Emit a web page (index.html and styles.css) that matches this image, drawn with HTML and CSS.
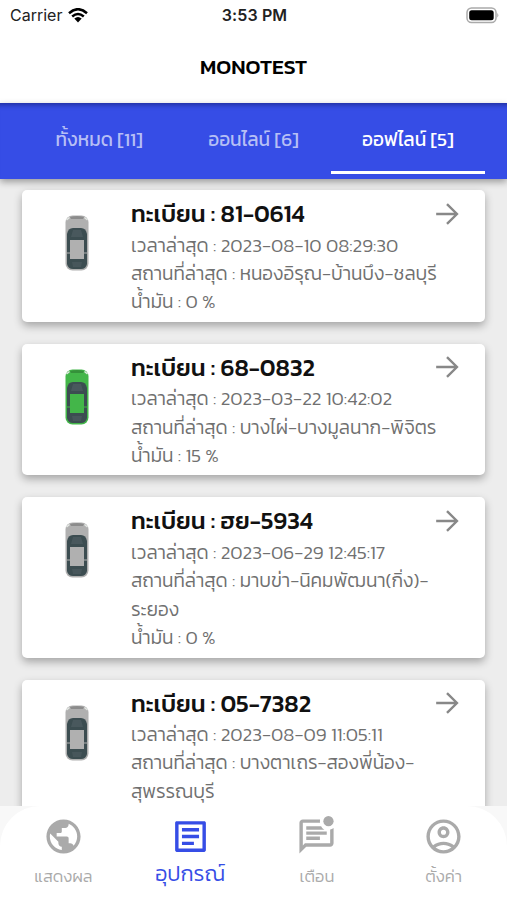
FILE: index.html
```html
<!DOCTYPE html>
<html lang="th">
<head>
  <meta charset="UTF-8" />
  <title>MONOTEST</title>
  <link rel="stylesheet" href="styles.css">
</head>
<body>
  <!-- shared shapes -->
  <svg class="defs" width="0" height="0">
    <symbol id="car" viewBox="0 0 24 56">
      <rect x="0.5" y="0.5" width="23" height="55" rx="7" fill="currentColor"/>
      <path d="M5 2 Q12 0 19 2 L18 4 H6Z" fill="#000" opacity=".2"/>
      <path d="M1.500 5 L4.500 2.500 M22.500 5 L19.500 2.500" stroke="#e4e8e4" stroke-width="1.500"/>
      <path d="M2 19 Q3 13 8 13 H16 Q21 13 22 19 V49 Q21 54 16 54 H8 Q3 54 2 49Z" fill="#3c4d51"/>
      <path d="M8 15 H16 L18 22 H6Z" fill="#526066" opacity=".6"/>
      <path d="M7 47 H17 L16 52 H8Z" fill="#526066" opacity=".5"/>
      <rect x="5" y="25" width="14" height="19" fill="currentColor"/>
      <path d="M1 38 H5 M19 38 H23" stroke="currentColor" stroke-width="1"/>
    </symbol>
    <symbol id="arrow" viewBox="0 0 24 24">
      <path d="M2 12 H21 M12 2.800 L21.200 12 L12 21.200" fill="none" stroke="currentColor" stroke-width="2.200"/>
    </symbol>
  </svg>

  <header class="top">
    <div class="status">
      <div class="carrier">
        <span>Carrier</span>
        <svg width="20" height="15" viewBox="0 0 20 15">
          <path d="M1 5.200 Q10 -2.800 19 5.200 M4.200 8.500 Q10 3.500 15.800 8.500" fill="none" stroke="#000" stroke-width="2.500"/>
          <path d="M6.300 10.600 Q10 7.500 13.700 10.600 L10 14.500Z"/>
        </svg>
      </div>
      <div class="time">3:53 PM</div>
      <svg class="battery" width="34" height="17" viewBox="0 0 34 17">
        <rect x="2" y="1" width="29" height="14.500" rx="4.500" fill="none" stroke="#aaa" stroke-width="1.500"/>
        <rect x="4.200" y="3.200" width="24.500" height="10" rx="2.500"/>
        <path d="M32.300 6 Q34.300 8.200 32.300 10.500Z" fill="#aaa"/>
      </svg>
    </div>
    <h1 class="title">MONOTEST</h1>
  </header>

  <nav class="tabs">
    <div class="tab"><span>ทั้งหมด [11]</span></div>
    <div class="tab"><span>ออนไลน์ [6]</span></div>
    <div class="tab active"><span>ออฟไลน์ [5]</span></div>
  </nav>

  <main class="list">
    <article class="card">
      <svg class="car"><use href="#car"/></svg>
      <div class="info">
        <h2>ทะเบียน : 81-0614</h2>
        <p>เวลาล่าสุด : 2023-08-10 08:29:30</p>
        <p>สถานที่ล่าสุด : หนองอิรุณ-บ้านบึง-ชลบุรี</p>
        <p>น้ำมัน : 0 %</p>
      </div>
      <svg class="arrow"><use href="#arrow"/></svg>
    </article>
    <article class="card">
      <svg class="car green"><use href="#car"/></svg>
      <div class="info">
        <h2>ทะเบียน : 68-0832</h2>
        <p>เวลาล่าสุด : 2023-03-22 10:42:02</p>
        <p>สถานที่ล่าสุด : บางไผ่-บางมูลนาก-พิจิตร</p>
        <p>น้ำมัน : 15 %</p>
      </div>
      <svg class="arrow"><use href="#arrow"/></svg>
    </article>
    <article class="card">
      <svg class="car"><use href="#car"/></svg>
      <div class="info">
        <h2>ทะเบียน : ฮย-5934</h2>
        <p>เวลาล่าสุด : 2023-06-29 12:45:17</p>
        <p>สถานที่ล่าสุด : มาบข่า-นิคมพัฒนา(กิ่ง)-<br>ระยอง</p>
        <p>น้ำมัน : 0 %</p>
      </div>
      <svg class="arrow"><use href="#arrow"/></svg>
    </article>
    <article class="card">
      <svg class="car"><use href="#car"/></svg>
      <div class="info">
        <h2>ทะเบียน : 05-7382</h2>
        <p>เวลาล่าสุด : 2023-08-09 11:05:11</p>
        <p>สถานที่ล่าสุด : บางตาเถร-สองพี่น้อง-<br>สุพรรณบุรี</p>
      </div>
      <svg class="arrow"><use href="#arrow"/></svg>
    </article>
  </main>

  <footer class="bottom">
    <div class="bar">
      <div class="item">
        <svg viewBox="0 0 24 24"><path d="M12 2C6.480 2 2 6.480 2 12s4.480 10 10 10 10-4.480 10-10S17.520 2 12 2zm-1 17.930c-3.950-.49-7-3.850-7-7.930 0-.62.080-1.210.210-1.790L9 15v1c0 1.100.9 2 2 2v1.930zm6.900-2.540c-.26-.81-1-1.390-1.900-1.390h-1v-3c0-.55-.45-1-1-1H8v-2h2c.55 0 1-.45 1-1V7h2c1.100 0 2-.9 2-2v-.41c2.930 1.190 5 4.060 5 7.410 0 2.080-.8 3.970-2.100 5.390z"/></svg>
        <span>แสดงผล</span>
      </div>
      <div class="item active">
        <svg viewBox="0 0 24 24"><path d="M19 5v14H5V5h14m1.100-2H3.900c-.5 0-.9.400-.9.900v16.200c0 .4.400.9.900.9h16.200c.4 0 .9-.5.900-.9V3.900c0-.5-.5-.9-.9-.9zM11 7h6v2h-6V7zm0 4h6v2h-6v-2zM7 7h4v2H7zm0 4h4v2H7zm0 4h7v2H7z"/></svg>
        <span>อุปกรณ์</span>
      </div>
      <div class="item">
        <svg viewBox="0 0 24 24"><path d="M4 4h10.100a5 5 0 0 1 0-2H4c-1.100 0-2 .9-2 2v18l4-4h14c1.100 0 2-.9 2-2V6.980a5 5 0 0 1-2 .92V16H5.200L4 17.200zM6 12h8v2H6zM6 9h12v2H6zM6 6h8.700c.4.800 1.100 1.500 1.900 2H6z"/><circle cx="19" cy="3" r="3"/></svg>
        <span>เตือน</span>
      </div>
      <div class="item">
        <svg viewBox="0 0 24 24"><path fill-rule="evenodd" d="M12 2C6.480 2 2 6.480 2 12s4.480 10 10 10 10-4.480 10-10S17.520 2 12 2zM7.350 18.500C8.660 17.560 10.260 17 12 17s3.340.56 4.650 1.500C15.340 19.440 13.740 20 12 20s-3.340-.56-4.650-1.500zm10.790-1.380C16.450 15.800 14.320 15 12 15s-4.450.8-6.140 2.120C4.700 15.730 4 13.950 4 12c0-4.420 3.580-8 8-8s8 3.580 8 8c0 1.950-.7 3.730-1.860 5.120zM12 6c-1.930 0-3.500 1.570-3.500 3.500S10.070 13 12 13s3.500-1.570 3.500-3.500S13.930 6 12 6zm0 5a1.500 1.500 0 1 1 0-3 1.500 1.500 0 0 1 0 3z"/></svg>
        <span>ตั้งค่า</span>
      </div>
    </div>
  </footer>
</body>
</html>
```
FILE: styles.css
```css
* {
  box-sizing: border-box;
}

body {
  margin: 0;
  height: 900px;
  display: flex;
  flex-direction: column;
  overflow: hidden;
  background: #ededed;
  font-family: Kanit, Prompt, "Noto Sans Thai", "Noto Sans", sans-serif;
}

.defs {
  position: absolute;
}

.top {
  height: 103px;
  flex: none;
  background: #fff;
}

.status {
  display: grid;
  grid-template-columns: 1fr auto 1fr;
  align-items: center;
  height: 29px;
  padding: 0 8px 0 10px;
  font: 16px/29px Inter, sans-serif;
  color: #222;
}

.carrier {
  display: flex;
  align-items: center;
  gap: 6px;
}

.time {
  padding-top: 1px;
  font-weight: 600;
  letter-spacing: 0.1px;
}

.battery {
  justify-self: end;
}

.title {
  margin: 22px 0 0;
  text-align: center;
  font-size: 21.300px;
  line-height: 31px;
  font-weight: 500;
  color: #000;
}

.tabs {
  height: 76px;
  flex: none;
  display: flex;
  padding: 0 22px;
  background: #364de6;
  box-shadow: inset 0 7px 5px -5px rgba(0, 0, 50, 0.4), 0 3px 7px rgba(0, 0, 0, 0.35);
}

.tab {
  flex: 1;
  height: 71px;
  text-align: center;
  font-size: 19px;
  line-height: 74px;
  white-space: nowrap;
  color: #b6bff5;
}

.tab.active {
  color: #fff;
  border-bottom: 3px solid #fff;
}

.list {
  flex: 1;
  min-height: 0;
  overflow: hidden;
  padding: 11px 22px 0;
  display: flex;
  flex-direction: column;
  gap: 22px;
}

.card {
  flex: none;
  display: flex;
  padding: 8px 25px 5px 43px;
  background: #fff;
  border-radius: 5px;
  box-shadow: 0 4px 8px rgba(0, 0, 0, 0.3);
}

.car {
  flex: none;
  width: 24px;
  height: 56px;
  margin: 17px 42px 0 0;
  color: #b0b0b0;
}

.car.green {
  color: #43b649;
}

.info {
  flex: 1;
  min-width: 0;
  white-space: nowrap;
}

.info h2 {
  margin: 0 0 1.500px;
  font-size: 24px;
  line-height: 32px;
  font-weight: 500;
  color: #111;
}

.info p {
  margin: 0;
  font-size: 19px;
  line-height: 28.400px;
  font-weight: 300;
  color: #707070;
}

.arrow {
  flex: none;
  width: 26px;
  height: 26px;
  margin-top: 2.500px;
  color: #888;
}

.bottom {
  height: 94px;
  flex: none;
  background: #f8f8f8;
}

.bar {
  height: 94px;
  display: flex;
  background: #fff;
  border-radius: 40px 40px 0 0;
}

.item {
  flex: 1;
  display: flex;
  flex-direction: column;
  align-items: center;
  padding-top: 10px;
  color: #aaa;
  font-size: 16.500px;
  font-weight: 300;
}

.item svg {
  width: 41px;
  height: 41px;
  fill: currentColor;
}

.item span {
  line-height: 40px;
}

.item.active {
  color: #364de6;
  font-size: 21.500px;
}

.item.active span {
  line-height: 33px;
}
```
